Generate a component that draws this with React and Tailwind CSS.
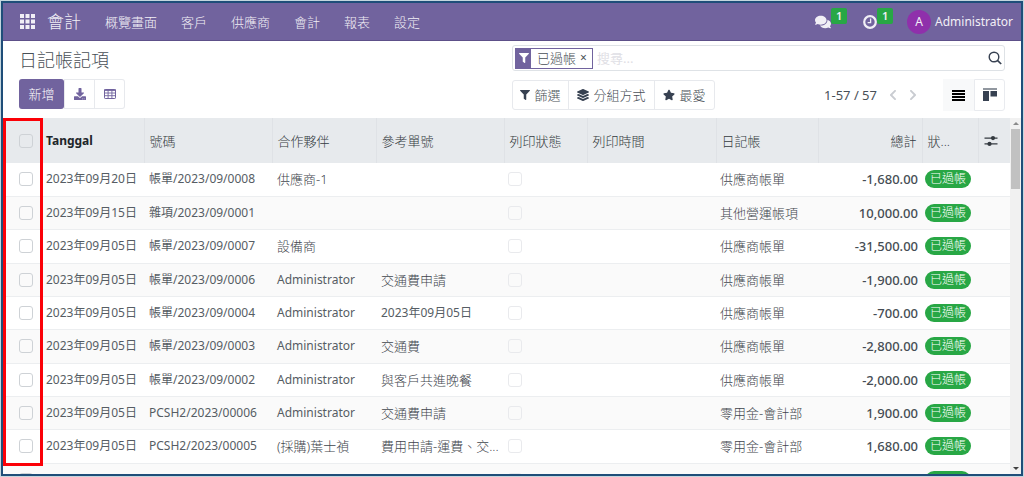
import { FaChevronLeft, FaChevronRight, FaComments, FaDownload, FaFilter, FaLayerGroup, FaStar } from 'react-icons/fa';

const menus = ['概覽畫面', '客戶', '供應商', '會計', '報表', '設定'];

const columns = [
  { label: 'Tanggal', width: 'w-[103px]', strong: true },
  { label: '號碼', width: 'w-32' },
  { label: '合作夥伴', width: 'w-[104px]' },
  { label: '參考單號', width: 'w-32' },
  { label: '列印狀態', width: 'w-[83px]' },
  { label: '列印時間', width: '' },
  { label: '日記帳', width: 'w-[102px]' },
  { label: '總計', width: 'w-[104px]', right: true },
  { label: '狀...', width: 'w-14' }
];

const entries = [
  { date: '2023年09月20日', number: '帳單/2023/09/0008', partner: '供應商-1', ref: '', journal: '供應商帳單', total: '-1,680.00' },
  { date: '2023年09月15日', number: '雜項/2023/09/0001', partner: '', ref: '', journal: '其他營運帳項', total: '10,000.00' },
  { date: '2023年09月05日', number: '帳單/2023/09/0007', partner: '設備商', ref: '', journal: '供應商帳單', total: '-31,500.00' },
  { date: '2023年09月05日', number: '帳單/2023/09/0006', partner: 'Administrator', ref: '交通費申請', journal: '供應商帳單', total: '-1,900.00' },
  { date: '2023年09月05日', number: '帳單/2023/09/0004', partner: 'Administrator', ref: '2023年09月05日', journal: '供應商帳單', total: '-700.00' },
  { date: '2023年09月05日', number: '帳單/2023/09/0003', partner: 'Administrator', ref: '交通費', journal: '供應商帳單', total: '-2,800.00' },
  { date: '2023年09月05日', number: '帳單/2023/09/0002', partner: 'Administrator', ref: '與客戶共進晚餐', journal: '供應商帳單', total: '-2,000.00' },
  { date: '2023年09月05日', number: 'PCSH2/2023/00006', partner: 'Administrator', ref: '交通費申請', journal: '零用金-會計部', total: '1,900.00' },
  { date: '2023年09月05日', number: 'PCSH2/2023/00005', partner: '(採購)葉士禎', ref: '費用申請-運費、交...', journal: '零用金-會計部', total: '1,680.00' },
  { date: '', number: '', partner: '', ref: '', journal: '', total: '' }
];

const cellFont = value => (/^[A-Z\d]/.test(value) ? 'text-[12px]' : 'font-light text-[#3f464d]');

const AppsIcon = () => (
  <svg viewBox="0 0 15 15" className="size-[15px]" fill="currentColor">
    {[0, 5.5, 11].map(y =>
      [0, 5.5, 11].map(x => <rect key={`${x}-${y}`} x={x} y={y} width="4" height="4" />)
    )}
  </svg>
);

const ClockIcon = () => (
  <svg viewBox="0 0 14 14" className="size-3.5" fill="none" stroke="currentColor">
    <circle cx="7" cy="7" r="5.8" strokeWidth="2.2" />
    <path d="M7.6 3.6V7.7H4.6" strokeWidth="1.3" />
  </svg>
);

const TableIcon = () => (
  <svg viewBox="0 0 12 10" className="h-2.5 w-3" fill="none" stroke="currentColor">
    <rect x="0.5" y="0.5" width="11" height="9" rx="0.7" />
    <path d="M0 1.2H12" strokeWidth="1.4" />
    <path d="M0.5 4H11.5M0.5 6.7H11.5M4.1 1V9.5M7.9 1V9.5" strokeWidth="0.9" />
  </svg>
);

const SearchIcon = () => (
  <svg viewBox="0 0 14 14" className="size-3.5" fill="none" stroke="currentColor">
    <circle cx="6" cy="6" r="4.8" strokeWidth="1.4" />
    <path d="M9.4 9.4L13.2 13" strokeWidth="1.7" />
  </svg>
);

const ListIcon = () => (
  <svg viewBox="0 0 13 11" className="h-[11px] w-[13px]" fill="currentColor">
    <path d="M0 0H13V2H0zM0 3H13V5H0zM0 6H13V8H0zM0 9H13V11H0z" />
  </svg>
);

const KanbanIcon = () => (
  <svg viewBox="0 0 14 14" className="size-3.5" fill="currentColor">
    <path d="M0 0H14V2H0z" opacity="0.55" />
    <path d="M0 3H6V13H0zM7.5 3H14V8.5H7.5z" />
  </svg>
);

const SettingsIcon = () => (
  <svg viewBox="0 0 14 12" className="h-3 w-3.5" fill="currentColor">
    <path d="M0.5 2.5H13.5V3.7H0.5zM0.5 8.3H13.5V9.5H0.5z" />
    <circle cx="9" cy="3.1" r="2.1" />
    <circle cx="5.5" cy="8.9" r="2.1" />
  </svg>
);

const Check = ({ label, faint = false }) => (
  <input
    type="checkbox"
    aria-label={label}
    className={`block size-3.5 appearance-none rounded-[3px] border ${faint ? 'border-[#e9eaed]' : 'border-[#ced2d6]'}`}
  />
);

const Counter = ({ children }) => (
  <span className="flex h-4 w-4 -translate-y-1.5 items-center justify-center rounded-xs bg-[#28a745] text-[11px] font-semibold">
    {children}
  </span>
);

const NavBar = () => (
  <header className="flex h-[38px] shrink-0 items-center border-b border-[#5d5089] bg-[#71639e] pr-2 pl-4 text-[#f1eff6]">
    <button type="button" aria-label="Apps" className="pl-px">
      <AppsIcon />
    </button>
    <a href="#" className="ml-3 text-[17px] font-light">會計</a>
    <nav className="ml-6 flex gap-6 font-light">
      {menus.map(menu => (
        <a key={menu} href="#">{menu}</a>
      ))}
    </nav>
    <div className="ml-auto flex items-center">
      <button type="button" aria-label="Messages" className="flex items-center">
        <FaComments className="size-4" />
        <Counter>1</Counter>
      </button>
      <button type="button" aria-label="Activities" className="ml-4 flex items-center">
        <ClockIcon />
        <Counter>1</Counter>
      </button>
      <button type="button" className="ml-3.5 flex items-center gap-1 text-[12px]">
        <span className="flex size-6 items-center justify-center rounded-full bg-[#8f30ab]">A</span>
        Administrator
      </button>
    </div>
  </header>
);

const ControlPanel = () => (
  <section className="flex h-[77px] shrink-0 justify-between px-4">
    <div className="flex flex-col">
      <h1 className="h-[38px] text-[18px] leading-[38px] font-light text-[#495057]">日記帳記項</h1>
      <div className="flex h-[30px] text-[#71639e]">
        <button type="button" className="w-[45px] rounded-[3px] bg-[#71639e] font-light text-white">新增</button>
        <button type="button" aria-label="Export" className="flex w-[31px] items-center justify-center border border-[#e7e9ed]">
          <FaDownload className="size-3" />
        </button>
        <button type="button" aria-label="Spreadsheet" className="flex w-[30px] items-center justify-center rounded-r-[3px] border border-l-0 border-[#e7e9ed]">
          <TableIcon />
        </button>
      </div>
    </div>

    <div className="flex w-[493px] flex-col gap-2 pt-1">
      <div className="flex h-[26px] items-center rounded-[3px] border border-[#dee2e6] px-0.5">
        <div className="flex h-[21px] w-[78px] items-center border border-[#71639e] text-[#495057]">
          <span className="flex h-full w-[15px] items-center justify-center bg-[#71639e] text-white">
            <FaFilter className="size-2.5" />
          </span>
          <span className="ml-1.5 font-light">已過帳</span>
          <button type="button" aria-label="Remove" className="ml-1 text-[12px]">×</button>
        </div>
        <input
          type="text"
          aria-label="搜尋"
          placeholder="搜尋..."
          className="ml-1 min-w-0 flex-1 outline-none placeholder:text-[#dfe0e5]"
        />
        <button type="button" aria-label="Search" className="text-[#374151]">
          <SearchIcon />
        </button>
      </div>

      <div className="flex items-center justify-between text-[#495057]">
        <div className="flex h-[30px] divide-x divide-[#e7e9ed] rounded-[3px] border border-[#e7e9ed] font-light">
          <button type="button" className="flex w-14 items-center justify-center gap-1">
            <FaFilter className="size-2.5 text-[#374151]" />篩選
          </button>
          <button type="button" className="flex w-[86px] items-center justify-center gap-1">
            <FaLayerGroup className="size-3 text-[#374151]" />分組方式
          </button>
          <button type="button" className="flex w-[59px] items-center justify-center gap-1">
            <FaStar className="size-3 text-[#374151]" />最愛
          </button>
        </div>
        <div className="flex items-center">
          <span>1-57 / 57</span>
          <button type="button" aria-label="Previous" className="ml-2.5 text-[#c9ccd1]">
            <FaChevronLeft className="size-3" />
          </button>
          <button type="button" aria-label="Next" className="ml-2 text-[#c9ccd1]">
            <FaChevronRight className="size-3" />
          </button>
          <div className="ml-6 flex h-8">
            <button type="button" aria-label="List" className="flex w-[31px] items-center justify-center bg-[#f8f9fa] text-black">
              <ListIcon />
            </button>
            <button type="button" aria-label="Kanban" className="flex w-[31px] items-center justify-center rounded-r-[3px] border border-[#e9ebef] text-[#374151]">
              <KanbanIcon />
            </button>
          </div>
        </div>
      </div>
    </div>
  </section>
);

const EntryTable = () => (
  <table className="w-full table-fixed border-collapse">
    <thead className="bg-[#e7eaed] text-[#343a40]">
      <tr className="h-[45px]">
        <th className="w-[38px] pl-4">
          <Check label="Select all" />
        </th>
        {columns.map(({ label, width, strong, right }) => (
          <th
            key={label}
            className={`border-r border-[#dfe2e6] px-[5px] whitespace-nowrap ${width} ${strong ? 'text-[12px] font-bold text-[#212529]' : 'font-light'} ${right ? 'text-right' : 'text-left'}`}
          >
            {label}
          </th>
        ))}
        <th className="w-8 pl-[5px]">
          <button type="button" aria-label="Columns" className="block">
            <SettingsIcon />
          </button>
        </th>
      </tr>
    </thead>
    <tbody className="text-[#565d64]">
      {entries.map((entry, i) => (
        <tr key={i} className="h-[33px] border-b border-[#eceef0] whitespace-nowrap nth-[3n]:h-[34px] even:bg-[#fafafa]">
          <td className="pl-4">
            <Check label={`Select ${entry.number}`} />
          </td>
          <td className="px-[5px] text-[12px]">{entry.date}</td>
          <td className="px-[5px] text-[12px]">{entry.number}</td>
          <td className={`px-[5px] ${cellFont(entry.partner)}`}>{entry.partner}</td>
          <td className={`px-[5px] ${cellFont(entry.ref)}`}>{entry.ref}</td>
          <td className="px-1">
            <Check label="列印狀態" faint />
          </td>
          <td />
          <td className={`px-1 ${cellFont(entry.journal)}`}>{entry.journal}</td>
          <td className="px-1 text-right font-medium text-[#454c53]">{entry.total}</td>
          <td className="pl-[3px]">
            <span className="flex h-[18px] w-[46px] items-center justify-center rounded-full bg-[#28a745] text-[12px] font-light text-white">
              {entry.total && '已過帳'}
            </span>
          </td>
          <td />
        </tr>
      ))}
    </tbody>
  </table>
);

const ScrollBar = () => (
  <div className="flex w-[11px] shrink-0 flex-col items-center justify-between bg-[#f1f1f1] py-1">
    <div className="flex w-full flex-col items-center gap-1">
      <span className="border-x-3 border-b-3 border-x-transparent border-b-[#8a8a8a]" />
      <span className="h-[60px] w-[9px] bg-[#c1c1c1]" />
    </div>
    <span className="border-x-3 border-t-3 border-x-transparent border-t-[#404040]" />
  </div>
);

export default function App() {
  return (
    <div className="h-screen bg-[#c5d6de] p-px font-['Noto_Sans','Noto_Sans_CJK_TC',sans-serif] text-[13px] leading-5">
      <div className="flex h-full flex-col overflow-hidden border-2 border-[#1f4e79] bg-white">
        <NavBar />
        <ControlPanel />
        <main className="relative flex min-h-0 flex-1">
          <div className="min-w-0 flex-1 overflow-hidden">
            <EntryTable />
          </div>
          <ScrollBar />
          {/* highlight round the selection column */}
          <div className="pointer-events-none absolute top-0 bottom-2 left-0 w-10 border-3 border-[#fb0007]" />
        </main>
      </div>
    </div>
  );
}
